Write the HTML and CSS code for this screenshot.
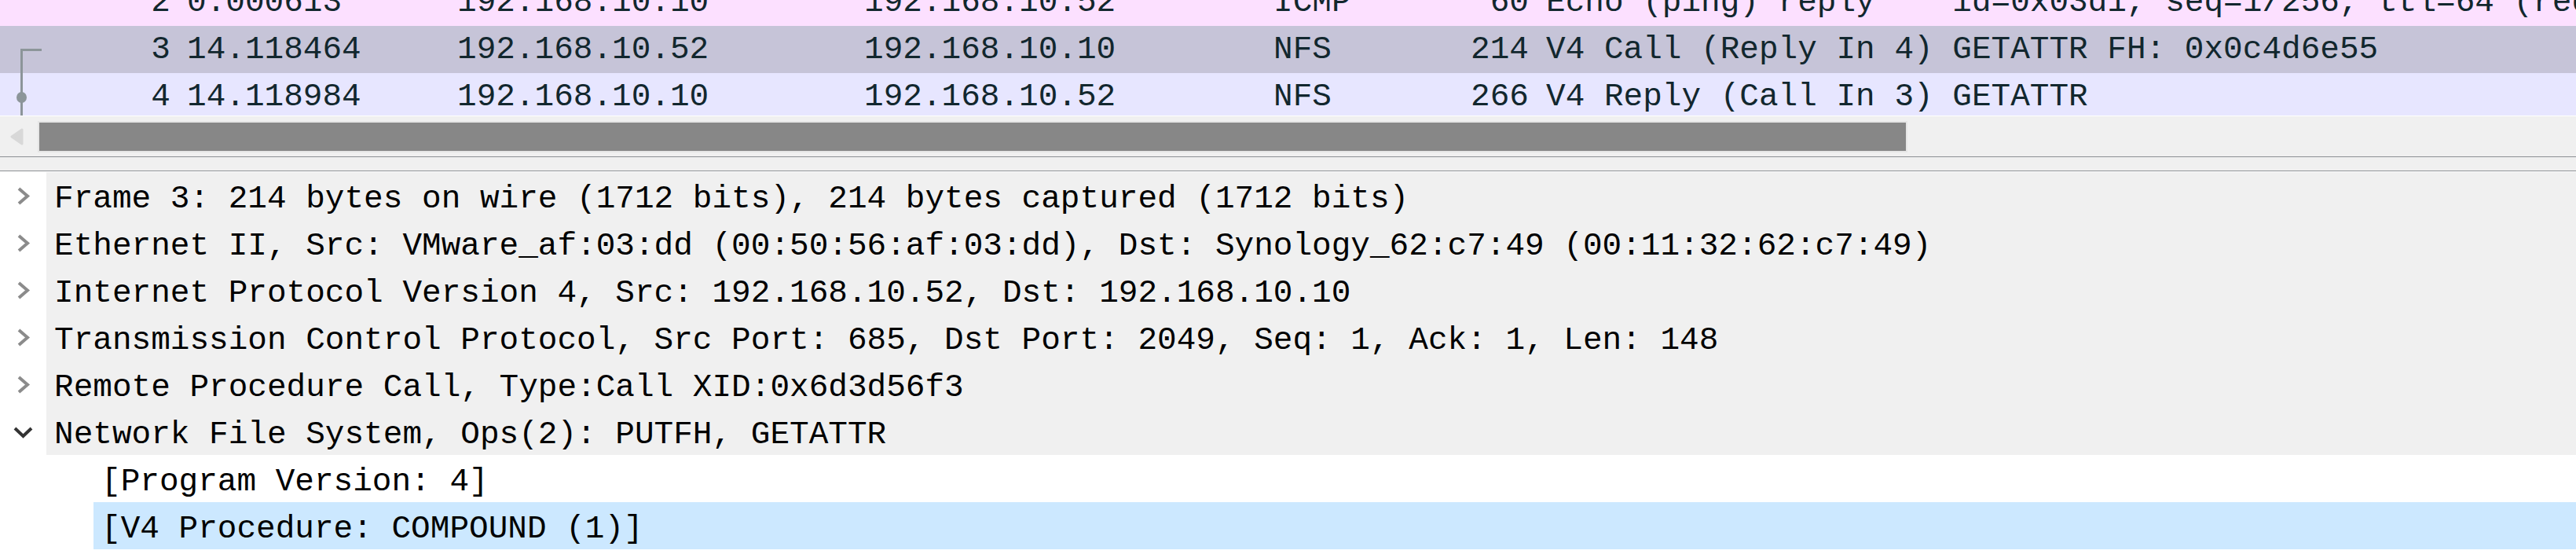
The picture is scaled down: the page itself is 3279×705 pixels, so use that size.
FILE: index.html
```html
<!DOCTYPE html>
<html>
<head>
<meta charset="utf-8">
<link rel="stylesheet" href="styles.css">
</head>
<body>
<div class="app">
  <div class="plist">
    <div class="plist-inner">
      <div class="prow icmp">
        <span class="c-no"><span class="num">2</span></span>
        <span class="c-time">0.000613</span>
        <span class="c-src">192.168.10.10</span>
        <span class="c-dst">192.168.10.52</span>
        <span class="c-proto">ICMP</span>
        <span class="c-len">60</span>
        <span class="c-info">Echo (ping) reply    id=0x03d1, seq=1/256, ttl=64 (request in 1)</span>
      </div>
      <div class="prow sel">
        <span class="c-no">
          <svg class="rel" width="60" height="60" viewBox="0 0 60 60"><path d="M53 30.5H27.5V60" fill="none" stroke="#8c9599" stroke-width="3"/></svg>
          <span class="num">3</span>
        </span>
        <span class="c-time">14.118464</span>
        <span class="c-src">192.168.10.52</span>
        <span class="c-dst">192.168.10.10</span>
        <span class="c-proto">NFS</span>
        <span class="c-len">214</span>
        <span class="c-info">V4 Call (Reply In 4) GETATTR FH: 0x0c4d6e55</span>
      </div>
      <div class="prow tcp">
        <span class="c-no">
          <svg class="rel" width="60" height="60" viewBox="0 0 60 60"><path d="M27.5 0V60" fill="none" stroke="#8c9599" stroke-width="3"/><ellipse cx="27.5" cy="31" rx="6.5" ry="7" fill="#8c9599"/></svg>
          <span class="num">4</span>
        </span>
        <span class="c-time">14.118984</span>
        <span class="c-src">192.168.10.10</span>
        <span class="c-dst">192.168.10.52</span>
        <span class="c-proto">NFS</span>
        <span class="c-len">266</span>
        <span class="c-info">V4 Reply (Call In 3) GETATTR</span>
      </div>
    </div>
  </div>
  <div class="hscroll">
    <div class="arrow-box">
      <svg width="18" height="22" viewBox="0 0 18 22"><path d="M16 2L3 11L16 20Z" fill="#d8d8d8" stroke="#d8d8d8" stroke-width="3" stroke-linejoin="round"/></svg>
    </div>
    <div class="thumb"></div>
  </div>
  <div class="splitter"></div>
  <div class="details">
    <div class="drow top">
      <span class="tog"><svg width="59" height="60" viewBox="0 0 59 60"><path d="M24 21L35 30.5L24 40" fill="none" stroke="#8b8b8b" stroke-width="4"/></svg></span>
      <span class="label">Frame 3: 214 bytes on wire (1712 bits), 214 bytes captured (1712 bits)</span>
    </div>
    <div class="drow top">
      <span class="tog"><svg width="59" height="60" viewBox="0 0 59 60"><path d="M24 21L35 30.5L24 40" fill="none" stroke="#8b8b8b" stroke-width="4"/></svg></span>
      <span class="label">Ethernet II, Src: VMware_af:03:dd (00:50:56:af:03:dd), Dst: Synology_62:c7:49 (00:11:32:62:c7:49)</span>
    </div>
    <div class="drow top">
      <span class="tog"><svg width="59" height="60" viewBox="0 0 59 60"><path d="M24 21L35 30.5L24 40" fill="none" stroke="#8b8b8b" stroke-width="4"/></svg></span>
      <span class="label">Internet Protocol Version 4, Src: 192.168.10.52, Dst: 192.168.10.10</span>
    </div>
    <div class="drow top">
      <span class="tog"><svg width="59" height="60" viewBox="0 0 59 60"><path d="M24 21L35 30.5L24 40" fill="none" stroke="#8b8b8b" stroke-width="4"/></svg></span>
      <span class="label">Transmission Control Protocol, Src Port: 685, Dst Port: 2049, Seq: 1, Ack: 1, Len: 148</span>
    </div>
    <div class="drow top">
      <span class="tog"><svg width="59" height="60" viewBox="0 0 59 60"><path d="M24 21L35 30.5L24 40" fill="none" stroke="#8b8b8b" stroke-width="4"/></svg></span>
      <span class="label">Remote Procedure Call, Type:Call XID:0x6d3d56f3</span>
    </div>
    <div class="drow top">
      <span class="tog"><svg width="59" height="60" viewBox="0 0 59 60"><path d="M19 26L29.5 36L40 26" fill="none" stroke="#333333" stroke-width="4"/></svg></span>
      <span class="label">Network File System, Ops(2): PUTFH, GETATTR</span>
    </div>
    <div class="drow child">
      <span class="indent"></span>
      <span class="label">[Program Version: 4]</span>
    </div>
    <div class="drow child selected">
      <span class="indent"></span>
      <span class="label">[V4 Procedure: COMPOUND (1)]</span>
    </div>
  </div>
</div>
</body>
</html>
```
FILE: styles.css
```css
html, body {
  margin: 0;
  padding: 0;
  background: #ffffff;
}
body {
  width: 3279px;
  height: 705px;
  overflow: hidden;
  font-family: "Liberation Mono", "DejaVu Sans Mono", monospace;
  font-size: 41.05px;
}
.app {
  width: 3279px;
}
.plist {
  height: 147px;
  overflow: hidden;
  background: #ffffff;
}
.plist-inner {
  margin-top: -27px;
}
.prow {
  display: grid;
  grid-template-columns: 217px 365px 518px 521px 183px 142px 1fr;
  height: 60px;
  line-height: 60px;
  color: #12272e;
  white-space: pre;
  overflow: hidden;
}
.prow.icmp { background: #fce0ff; }
.prow.sel { background: #c6c4d8; }
.prow.tcp { background: #e7e6ff; }
.prow > span {
  overflow: hidden;
  display: block;
  height: 60px;
}
.c-no {
  display: flex !important;
  justify-content: flex-end;
}
.c-no .rel {
  margin-right: auto;
  flex: none;
}
.c-time { padding-left: 21px; }
.c-len { text-align: right; }
.c-info { padding-left: 22px; }

.hscroll {
  height: 51px;
  border-top: 1px solid #ffffff;
  background: #f0f0f0;
  display: flex;
  align-items: center;
}
.arrow-box {
  width: 48px;
  height: 51px;
  display: flex;
  align-items: center;
  justify-content: center;
}
.arrow-box svg {
  margin-left: -6px;
}
.thumb {
  width: 2376px;
  height: 36px;
  background: #878787;
  border: 2px solid #e6e6e6;
}
.splitter {
  height: 17px;
  border-top: 1px solid #8d9094;
  border-bottom: 1px solid #8d9094;
  background: #f0f0f0;
  margin-bottom: 1px;
}
.details {
  background: #ffffff;
}
.drow {
  display: flex;
  height: 60px;
  color: #000000;
  white-space: pre;
}
.drow .tog {
  width: 59px;
  height: 60px;
  flex: none;
  background: #ffffff;
}
.drow .tog svg {
  display: block;
}
.drow .indent {
  width: 119px;
  flex: none;
}
.drow .label {
  flex: 1;
  height: 60px;
  box-sizing: border-box;
  padding-top: 8px;
  line-height: 52px;
  overflow: hidden;
}
.drow.top .label {
  background: #f0f0f0;
  padding-left: 10px;
}
.drow.child .label {
  padding-left: 10px;
}
.drow.child.selected .label {
  background: #cce8ff;
}
```
